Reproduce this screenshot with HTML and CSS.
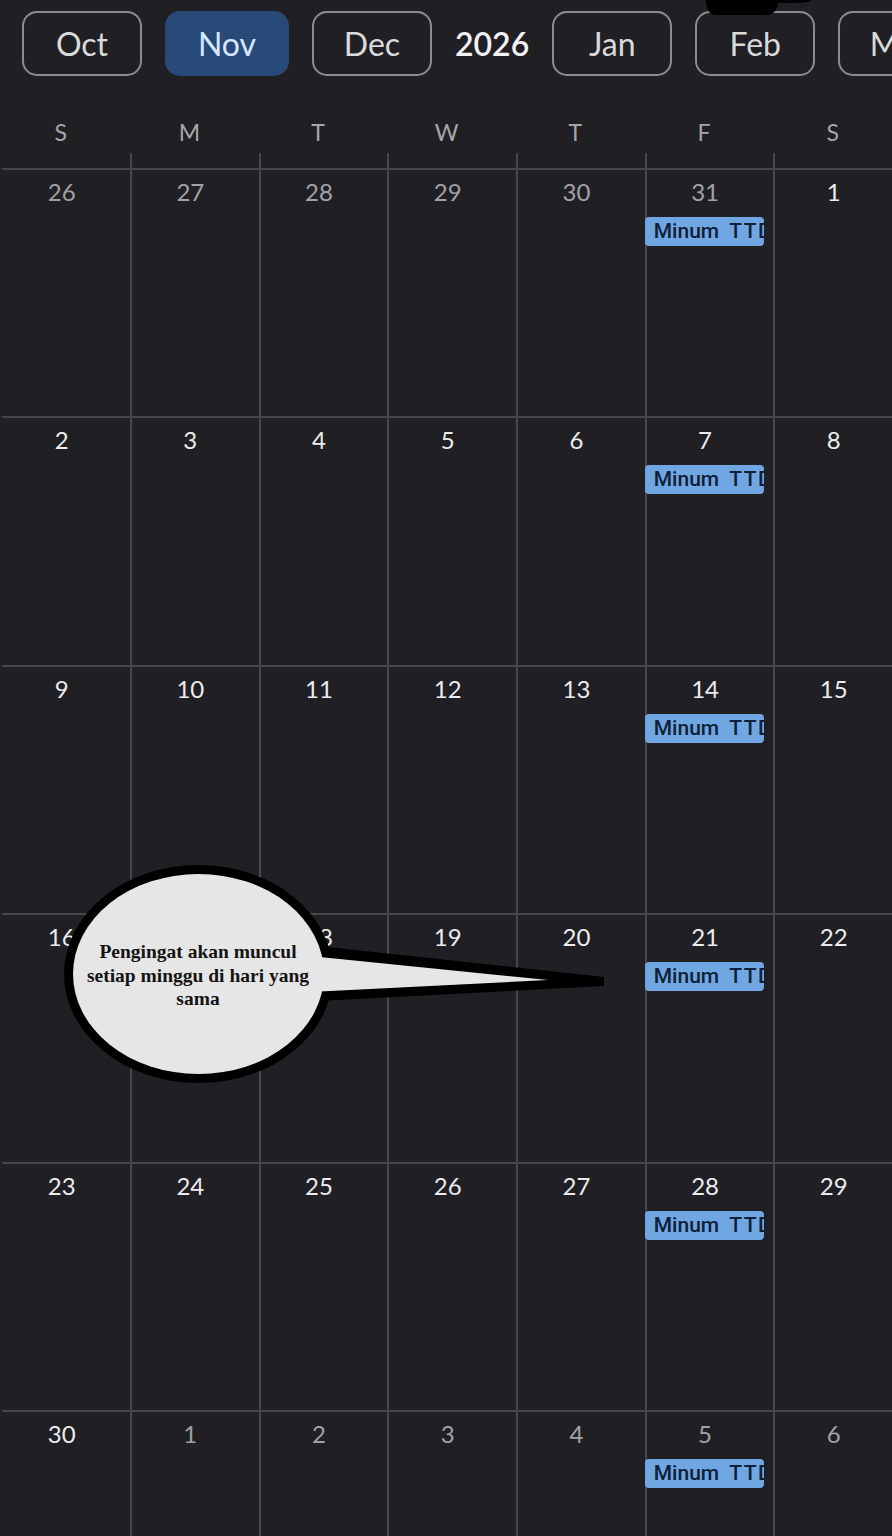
FILE: index.html
```html
<!DOCTYPE html>
<html lang="id">
<head>
<meta charset="utf-8">
<title>Kalender</title>
<link rel="stylesheet" href="styles.css">
</head>
<body>
<div class="page">
  <nav class="months">
    <span class="month">Oct</span>
    <span class="month active">Nov</span>
    <span class="month">Dec</span>
    <span class="year">2026</span>
    <span class="month">Jan</span>
    <span class="month">Feb</span>
    <span class="month">Mar</span>
  </nav>

  <div class="weekdays">
    <div>S</div><div>M</div><div>T</div><div>W</div><div>T</div><div>F</div><div>S</div>
  </div>
  <div class="ticks">
    <div></div><div></div><div></div><div></div><div></div><div></div><div></div>
  </div>

  <div class="grid">
    <div class="cell"><div class="num dim">26</div></div>
    <div class="cell"><div class="num dim">27</div></div>
    <div class="cell"><div class="num dim">28</div></div>
    <div class="cell"><div class="num dim">29</div></div>
    <div class="cell"><div class="num dim">30</div></div>
    <div class="cell"><div class="num dim">31</div><div class="chip">Minum <span class="code">TTD</span></div></div>
    <div class="cell"><div class="num">1</div></div>

    <div class="cell"><div class="num">2</div></div>
    <div class="cell"><div class="num">3</div></div>
    <div class="cell"><div class="num">4</div></div>
    <div class="cell"><div class="num">5</div></div>
    <div class="cell"><div class="num">6</div></div>
    <div class="cell"><div class="num">7</div><div class="chip">Minum <span class="code">TTD</span></div></div>
    <div class="cell"><div class="num">8</div></div>

    <div class="cell"><div class="num">9</div></div>
    <div class="cell"><div class="num">10</div></div>
    <div class="cell"><div class="num">11</div></div>
    <div class="cell"><div class="num">12</div></div>
    <div class="cell"><div class="num">13</div></div>
    <div class="cell"><div class="num">14</div><div class="chip">Minum <span class="code">TTD</span></div></div>
    <div class="cell"><div class="num">15</div></div>

    <div class="cell"><div class="num">16</div></div>
    <div class="cell"><div class="num">17</div></div>
    <div class="cell"><div class="num">18</div></div>
    <div class="cell"><div class="num">19</div></div>
    <div class="cell"><div class="num">20</div></div>
    <div class="cell"><div class="num">21</div><div class="chip">Minum <span class="code">TTD</span></div></div>
    <div class="cell"><div class="num">22</div></div>

    <div class="cell"><div class="num">23</div></div>
    <div class="cell"><div class="num">24</div></div>
    <div class="cell"><div class="num">25</div></div>
    <div class="cell"><div class="num">26</div></div>
    <div class="cell"><div class="num">27</div></div>
    <div class="cell"><div class="num">28</div><div class="chip">Minum <span class="code">TTD</span></div></div>
    <div class="cell"><div class="num">29</div></div>

    <div class="cell"><div class="num">30</div></div>
    <div class="cell"><div class="num dim">1</div></div>
    <div class="cell"><div class="num dim">2</div></div>
    <div class="cell"><div class="num dim">3</div></div>
    <div class="cell"><div class="num dim">4</div></div>
    <div class="cell"><div class="num dim">5</div><div class="chip">Minum <span class="code">TTD</span></div></div>
    <div class="cell"><div class="num dim">6</div></div>
  </div>

  <svg class="smudge" width="892" height="20" viewBox="0 0 892 20" aria-hidden="true">
    <path d="M706 0 L812 0 C811 2 804 3 792 3 L778 3 C777 11 773 15 766 15 L716 15 C710 15 706 10 706 0 Z" fill="#000"/>
  </svg>

  <svg class="bubble" width="620" height="240" viewBox="0 850 620 240" aria-hidden="true">
    <ellipse cx="198.5" cy="974" rx="134.5" ry="109" fill="#000"/>
    <polygon points="300,944 604,977 604,986 300,1002" fill="#000"/>
    <ellipse cx="198.5" cy="974" rx="125.5" ry="100" fill="#e6e6e6"/>
    <polygon points="290,954 548,980 290,993" fill="#e6e6e6"/>
  </svg>
  <div class="bubble-text">Pengingat akan muncul<br>setiap minggu di hari yang<br>sama</div>
</div>
</body>
</html>
```

FILE: styles.css
```css
html, body {
  margin: 0;
  padding: 0;
  overflow: hidden;
  background: #202024;
}

.page {
  position: relative;
  width: 892px;
  height: 1536px;
  overflow: hidden;
  background: #202024;
  font-family: "Lato", "Open Sans", sans-serif;
}

.months {
  display: flex;
  align-items: center;
  gap: 23px;
  padding: 11px 0 0 22px;
  white-space: nowrap;
}

.month {
  flex: none;
  box-sizing: border-box;
  width: 120px;
  height: 65px;
  border: 2px solid #8c8c8f;
  border-radius: 15px;
  display: flex;
  align-items: center;
  justify-content: center;
  font-size: 32px;
  color: #dadadc;
}

.month.active {
  width: 124px;
  background: #284a78;
  border-color: #284a78;
  color: #d6e8ff;
}

.year {
  flex: none;
  font-size: 32px;
  font-weight: 600;
  color: #f2f2f4;
}

.weekdays,
.ticks,
.grid {
  display: grid;
  grid-template-columns: repeat(7, 128.7px);
  margin-left: 1.3px;
}

.weekdays {
  margin-top: 41px;
  height: 36px;
}

.weekdays div {
  line-height: 30px;
  padding-right: 10px;
  text-align: center;
  font-size: 23px;
  color: #a6a6aa;
}

.ticks {
  height: 15px;
}

.ticks div {
  border-left: 2px solid #47474b;
}

.ticks div:first-child {
  border-left-color: transparent;
}

.grid {
  grid-auto-rows: 248.4px;
}

.cell {
  box-sizing: border-box;
  border-top: 2px solid #47474b;
  border-left: 2px solid #47474b;
  padding: 6px 10px 0 0;
}

.cell:nth-child(7n+1) {
  border-left-color: transparent;
}

.num {
  line-height: 32px;
  text-align: center;
  font-size: 24px;
  color: #ececee;
}

.num.dim {
  color: #a2a2a6;
}

.chip {
  box-sizing: border-box;
  width: 119px;
  height: 29px;
  margin: 9px 0 0 -2px;
  padding-left: 9px;
  border-radius: 4px;
  background: #70a7e2;
  color: #0f2038;
  font-family: "Roboto", sans-serif;
  font-weight: 500;
  font-size: 21px;
  line-height: 29px;
  word-spacing: 5px;
  white-space: nowrap;
  overflow: hidden;
}

.chip .code {
  letter-spacing: 1.5px;
}

.smudge {
  position: absolute;
  left: 0;
  top: 0;
}

.bubble {
  position: absolute;
  left: 0;
  top: 850px;
}

.bubble-text {
  position: absolute;
  left: 58px;
  top: 940px;
  width: 280px;
  text-align: center;
  font-family: "Liberation Serif", "Times New Roman", serif;
  font-weight: 700;
  font-size: 19.5px;
  line-height: 23.5px;
  color: #141414;
}
```
